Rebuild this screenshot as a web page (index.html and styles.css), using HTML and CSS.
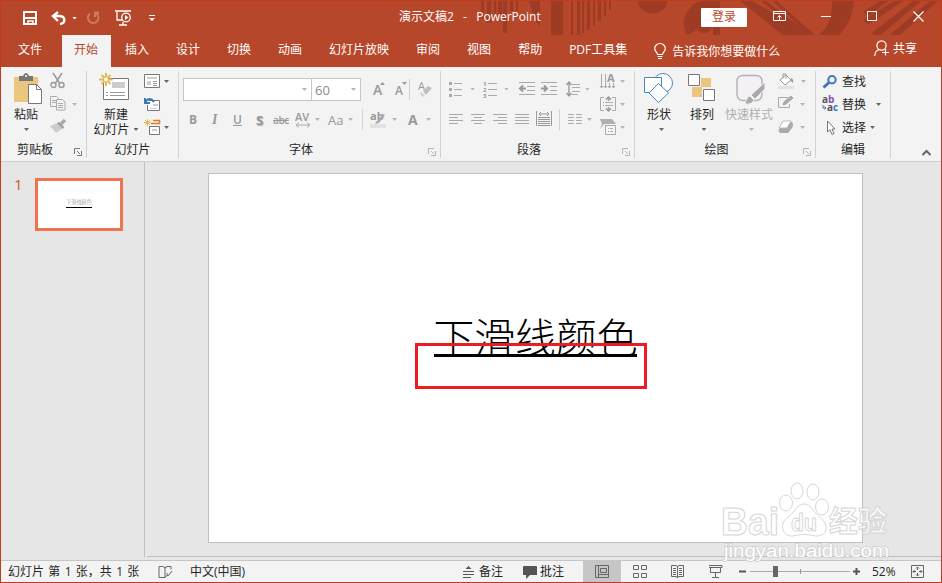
FILE: index.html
```html
<!DOCTYPE html>
<html lang="zh-CN">
<head>
    <meta charset="UTF-8">
    <meta name="viewport" content="width=device-width, initial-scale=1.0">
    <title>演示文稿2 - PowerPoint</title>
    <link rel="stylesheet" href="styles.css">
</head>
<body>
<div class="window">
    <header class="titlebar">
        <svg class="pattern" width="462" height="34" fill="#9e3b25">
            <path d="M2 0h3v18h-3zM8 0h4v22h-4zM15 0h2v18h-2zM19 0h4v14h-4zM24 0h4v32h-4zM31 0h3v10h-3zM37 0h2v10h-2zM50 0h11v26Q54 17 50 0zM72 0h12v37H72zM92 0h2v36h-2zM98 0h3v34h-3zM103 0h2v32h-2zM108 0h3v29h-3zM114 0h2v25h-2zM119 0h3v20h-3zM125 0h2v15h-2zM130 0h2v9h-2z"/>
            <path d="M159 0h29a14 12 0 0 1-29 0z"/>
            <path d="M208 34Q200 18 212 6q4-5 11-6h18v34h-7V22a12 12 0 0 0-18 8z"/>
            <circle cx="225" cy="23" r="9"/>
            <path d="M261 0h12l60 34h-29zM282 0h5l45 34h-7zM294 0h4l38 34h-6zM353 0h22q-2 22-15 34h-20q14-12 13-34z"/>
            <path d="M415 0h9l-35 24-5-5zM434 0h8l-44 37-5-5zM451 0h8l-46 41-5-5zM401 0h8l-20 15-5-4z"/>
        </svg>
        <div class="quick">
            <svg width="14" height="14" fill="none" stroke="#fff"><path d="M1 1h12v12H1zM1 7h12" stroke-width="2"/><path d="M5 13v-3h5v3" stroke-width="1.500"/></svg>
            <svg width="16" height="14" fill="none" stroke="#fff" stroke-width="2.4"><path d="M7 1L2 5l5 5M2 5h6c7 0 7 7 1 8"/></svg>
            <i class="caret light"></i>
            <svg width="14" height="14" fill="none" stroke="#cd7a64" stroke-width="2"><path d="M4 2.5a5.3 5.3 0 1 0 6-.3M9 6V1.5h4"/></svg>
            <svg width="17" height="16" fill="none" stroke="#fff" stroke-width="1.3"><path d="M0 1h16M2 2v8h5M8 12v3M4 15h8"/><circle cx="11" cy="7.5" r="4.3"/><path d="M10 5l3.5 2.5L10 10z" fill="#fff" stroke="none"/></svg>
            <svg width="6" height="7" fill="#fff"><path d="M0 0h6v1H0zM0 3h6L3 6z"/></svg>
        </div>
        <div class="doc-title">演示文稿2 &nbsp;- &nbsp;PowerPoint</div>
        <button class="login">登录</button>
        <div class="controls">
            <svg width="14" height="11" fill="none" stroke="#fff"><path d="M.5 .5h12v9H.5zM.5 2.5h12M6.5 9V4.500M4.500 6.500l2-2 2 2"/></svg>
            <svg width="11" height="11" stroke="#fff"><path d="M0 5.500h10"/></svg>
            <svg width="11" height="11" fill="none" stroke="#fff"><path d="M.5 .5h9v9h-9z"/></svg>
            <svg width="11" height="11" stroke="#fff" stroke-width="1.2"><path d="M.5 .5l10 10M10.500 .5l-10 10"/></svg>
        </div>
    </header>

    <nav class="tabs">
        <span class="tab file">文件</span>
        <span class="tab active">开始</span>
        <span class="tab">插入</span>
        <span class="tab">设计</span>
        <span class="tab">切换</span>
        <span class="tab">动画</span>
        <span class="tab">幻灯片放映</span>
        <span class="tab">审阅</span>
        <span class="tab">视图</span>
        <span class="tab">帮助</span>
        <span class="tab">PDF工具集</span>
        <span class="tell">
            <svg width="12" height="17" fill="none" stroke="#fff" stroke-width="1.2"><path d="M3.500 11.500C3 9 .7 8.500.7 5.500a5.300 5 0 0 1 10.600 0c0 3-2.300 3.500-2.800 6zM3.500 13.500h5M4 15.500h4"/></svg>
            告诉我你想要做什么
        </span>
        <span class="share">
            <svg width="16" height="17" fill="none" stroke="#fff" stroke-width="1.2"><circle cx="7.500" cy="5.500" r="4.600"/><path d="M.7 16c.3-4 2-6 4.800-6.500M11.500 9v6.500M8 12.500h7"/></svg>
            共享
        </span>
    </nav>

    <section class="ribbon">
        <div class="group clipboard">
            <div class="group-body">
                <div class="big">
                    <svg width="28" height="31"><path d="M0 4h24v25H0z" fill="#ebc67f"/><path d="M5 3h4q1-3 3-3t3 3h4v5H5z" fill="#777"/><circle cx="12" cy="3" r="1" fill="#fff"/><path d="M14.500 11.500h8l5 5v14h-13z" fill="#fff" stroke="#777"/><path d="M22.500 11.500v5h5" fill="none" stroke="#777"/></svg>
                    <span>粘贴</span>
                    <i class="caret"></i>
                </div>
                <div class="stack">
                    <svg width="16" height="16" fill="none" stroke="#999" stroke-width="1.400"><path d="M3 0l6.500 10M12 0L5.500 10"/><circle cx="3.500" cy="12" r="2.500"/><circle cx="11.500" cy="12" r="2.500"/></svg>
                    <svg width="16" height="15" fill="#f3f3f3" stroke="#aaa"><path d="M.5 .5h6l2 2v8h-8zM2 4.500h4M2 6.500h4"/><path d="M6.500 3.500h6l2.500 2.500v8H6.500zM8 7.500h5M8 9.500h5M8 11.500h5"/></svg>
                    <svg width="17" height="15"><path d="M0 7l8-3 5 5-7 5z" fill="#ccc"/><path d="M7 4l2-1 5 5-1 2z" fill="#999"/><path d="M11 5l4-4" stroke="#aaa" stroke-width="3.500"/></svg>
                </div>
                <i class="caret pale"></i>
            </div>
            <div class="group-label"><span>剪贴板</span><svg class="launcher" width="8" height="8"><path d="M.5 6V.5H6M3 3l3 3M7.500 3v4.500H3" /></svg></div>
        </div>

        <div class="group slides">
            <div class="group-body">
                <div class="big">
                    <svg width="32" height="31" fill="none"><path d="M4.500 5.500h25v21h-25z" fill="#fff" stroke="#777"/><path d="M13 9h13v6H13z" fill="#ccc"/><path d="M7 19.500h2M11 19.500h15M7 22.500h2M11 22.500h15" stroke="#999"/><path d="M7 0v13M0 6.500h14M2.500 2l9 9M11.500 2l-9 9" stroke="#e9b653" stroke-width="2"/><circle cx="7" cy="6.500" r="2" fill="#fff"/></svg>
                    <span>新建</span>
                    <span class="with-caret">幻灯片<i class="caret"></i></span>
                </div>
                <div class="stack carets">
                    <div><svg width="16" height="15" fill="#fff" stroke="#777"><path d="M.5 1.500h15v13H.5z"/><path d="M3 4h10v2H3zM3 8h4v4H3z" fill="#ccc" stroke="none"/><path d="M9 8.500h4M9 10.500h4M9 12.500h4" stroke="#999"/></svg><i class="caret"></i></div>
                    <div><svg width="16" height="16" fill="none" stroke="#777"><path d="M4.500 4.500h11v10h-12V9" fill="#fff"/><path d="M9 8h5v2H9zM6 12h7v1H6z" fill="#ccc" stroke="none"/><path d="M1 2v5h5M1 6q5-6 9 0" stroke="#3c77b3" stroke-width="2"/></svg></div>
                    <div><svg width="16" height="16" fill="none" stroke="#777"><path d="M5.500 7.500h10v8h-10z" fill="#fff"/><path d="M8 10h5v2H8z" fill="#ccc" stroke="none"/><path d="M7 4.500h8.500v-3H9" stroke="#e17a2d" stroke-width="1.500"/><path d="M3.500 0v7M0 3.500h7M1 1l5 5M6 1L1 6" stroke="#e9b653"/></svg><i class="caret"></i></div>
                </div>
            </div>
            <div class="group-label"><span>幻灯片</span></div>
        </div>

        <div class="group font">
            <div class="group-body">
                <div class="font-row top">
                    <div class="select"><i class="caret pale"></i></div>
                    <div class="select size">60<i class="caret pale"></i></div>
                    <svg width="13" height="16"><text x="0" y="13" class="glyph large">A</text><path d="M7 3h5L9.500 0z" fill="#999"/></svg>
                    <svg width="13" height="16"><text x="0" y="13" class="glyph mid">A</text><path d="M7 0h5L9.500 3z" fill="#999"/></svg>
                    <b class="line"></b>
                    <svg width="15" height="16"><text x="0" y="8" class="glyph">A</text><path d="M5 9l5-5 4 2-6 7z" fill="#c0c0c0"/><path d="M3 10l4 4-2 1-3-3z" fill="#d0d0d0"/></svg>
                </div>
                <div class="font-row bottom">
                    <b class="fmt">B</b>
                    <i class="fmt serif">I</i>
                    <u class="fmt bold">U</u>
                    <b class="fmt shadow">S</b>
                    <s class="fmt small">abc</s>
                    <svg width="16" height="16"><text x="0" y="9" class="glyph semi">AV</text><path d="M1 13h14M4 10.500L1 13l3 2.500M12 10.500l3 2.500-3 2.500" fill="none" stroke="#aaa"/></svg>
                    <i class="caret pale"></i>
                    <span class="fmt wide">Aa</span>
                    <i class="caret pale"></i>
                    <b class="line"></b>
                    <svg width="17" height="16"><text x="0" y="8" class="glyph bold">ab</text><path d="M0 12h16v4H0z" fill="#e5e0e5"/><path d="M6 10l7-8 2 1-6 8-4 1z" fill="#aaa"/></svg>
                    <i class="caret pale"></i>
                    <b class="fmt color">A</b>
                    <i class="caret pale"></i>
                </div>
            </div>
            <div class="group-label"><span>字体</span><svg class="launcher off" width="8" height="8"><path d="M.5 6V.5H6M3 3l3 3M7.500 3v4.500H3" /></svg></div>
        </div>

        <div class="group paragraph">
            <div class="group-body">
                <div class="para-rows">
                    <div class="para-row top">
                        <svg width="14" height="16" stroke="#aaa"><path d="M5 2.500h8M5 8.500h8M5 14.500h8"/><path d="M0 2.500h3M0 8.500h3M0 14.500h3" stroke-width="3"/></svg>
                        <i class="caret pale"></i>
                        <svg width="15" height="16"><path d="M5 2.500h9M5 8.500h9M5 14.500h9" stroke="#aaa"/><text x="0" y="5" class="tiny">1</text><text x="0" y="11" class="tiny">2</text><text x="0" y="17" class="tiny">3</text></svg>
                        <i class="caret pale"></i>
                        <svg width="17" height="14" fill="none" stroke="#aaa"><path d="M0 .5h16M8 4.500h8M8 8.500h8M0 12.500h16"/><path d="M7 6.500H1M4 3.500l-3 3 3 3" stroke="#999" stroke-width="2"/></svg>
                        <svg width="17" height="14" fill="none" stroke="#aaa"><path d="M0 .5h16M9 4.500h7M9 8.500h7M0 12.500h16"/><path d="M0 6.500h6M3 3.500l3 3-3 3" stroke="#999" stroke-width="2"/></svg>
                        <svg width="15" height="16" fill="none" stroke="#aaa"><path d="M6 3.500h8M6 6.500h8M6 10.500h8M6 13.500h6"/><path d="M3 1v14M.5 4L3 1l2.500 3M.5 12L3 15l2.500-3" stroke="#999" stroke-width="1.400"/></svg>
                        <i class="caret pale"></i>
                    </div>
                    <div class="para-row bottom">
                        <svg width="14" height="11" stroke="#aaa"><path d="M0 .5h14M0 3.500h9M0 6.500h14M0 9.500h9"/></svg>
                        <svg width="14" height="11" stroke="#aaa"><path d="M0 .5h14M3 3.500h8M0 6.500h14M3 9.500h8"/></svg>
                        <svg width="14" height="11" stroke="#aaa"><path d="M0 .5h14M5 3.500h9M0 6.500h14M5 9.500h9"/></svg>
                        <svg width="14" height="11" stroke="#aaa"><path d="M0 .5h14M0 3.500h14M0 6.500h14M0 9.500h14"/></svg>
                        <svg width="17" height="17" fill="none" stroke="#999"><path d="M.5 0v15M15.500 0v15M3 3h10M5 1L3 3l2 2M11 1l2 2-2 2M2 6.500h12M2 8.500h12M2 10.500h12M2 12.500h12M2 14.500h12"/></svg>
                        <b class="line"></b>
                        <svg width="14" height="11" stroke="#aaa"><path d="M0 .5h6M8 .5h6M0 3.500h6M8 3.500h6M0 6.500h6M8 6.500h6M0 9.500h6M8 9.500h6"/></svg>
                        <i class="caret pale"></i>
                    </div>
                </div>
                <div class="stack carets">
                    <div><svg width="16" height="16"><path d="M1.500 1v14M5.500 1v14M9.500 10v5M13.500 10v5M0 13l1.500 2L3 13M4 13l1.500 2L7 13M8 13l1.500 2 1.500-2M12 13l1.500 2 1.500-2" fill="none" stroke="#aaa"/><text x="7" y="8.500" class="glyph bold">A</text></svg><i class="caret pale"></i></div>
                    <div><svg width="16" height="16" fill="none" stroke="#aaa"><path d="M4 1.500H.5v13H4M12 1.500h3.500v13H12M3 6.500h1M5 6.500h8M3 9.500h1M5 9.500h8"/><path d="M8.500 5V1M6 3.500L8.500 1 11 3.500M8.500 11v4M6 12.500L8.500 15l2.500-2.500" stroke="#999" stroke-width="1.500"/></svg><i class="caret pale"></i></div>
                    <div><svg width="16" height="16"><path d="M0 0h12l4 5H4l-4 5 2-5z" fill="#b0b0b0"/><path d="M5.500 6.500h10v9h-10z" fill="#f8f4f8" stroke="#aaa"/><path d="M8 9.500h1M10 9.500h3M8 12.500h1M10 12.500h3" stroke="#aaa"/></svg><i class="caret pale"></i></div>
                </div>
            </div>
            <div class="group-label"><span>段落</span><svg class="launcher off" width="8" height="8"><path d="M.5 6V.5H6M3 3l3 3M7.500 3v4.500H3" /></svg></div>
        </div>

        <div class="group drawing">
            <div class="group-body">
                <div class="big">
                    <svg width="30" height="31" fill="#fff" stroke="#4a86be"><circle cx="19" cy="10" r="9.500"/><path d="M.5 4.500h17v15H.5z"/><path d="M14.500 10.500l10 9.500-10 9.500L5 20z"/></svg>
                    <span>形状</span>
                    <i class="caret"></i>
                </div>
                <div class="big">
                    <svg width="28" height="31" fill="#fff" stroke="#777"><path d="M13 5h10v9H13zM4 14h10v10H4z" fill="#ebc67f" stroke="none"/><path d="M.5 1.500h11v11H.5zM15.500 16.500h11v11h-11z"/></svg>
                    <span>排列</span>
                    <i class="caret"></i>
                </div>
                <div class="big disabled">
                    <svg width="30" height="31" fill="#f5f0f5" stroke="#b5b0b5"><path d="M7 2.500h13q6 0 6 6v12q0 7-6 7H7q-6 0-6-7v-12q0-6 6-6z" stroke-width="1.400"/><path d="M29 9v7l-10 10-4-4zM14 23l4 4q-2 5-9 4 2-8 5-8z" fill="#aaa" stroke="#f3f3f3"/></svg>
                    <span>快速样式</span>
                    <i class="caret pale"></i>
                </div>
                <div class="stack carets">
                    <div><svg width="17" height="16"><path d="M8 2l5 5-6 5-5-5zM5 5V1h3v5" fill="#fff" stroke="#999"/><path d="M13 5q3 1 2 5l-2-2z" fill="#999"/><path d="M0 13h16v3H0z" fill="#e5e0e5"/></svg><i class="caret pale"></i></div>
                    <div><svg width="16" height="15" fill="none" stroke="#aaa"><path d="M10 1.500H.5v10h11V8"/><path d="M5 9l1-3 7-6 2 2-7 6z" fill="#aaa"/></svg><i class="caret pale"></i></div>
                    <div><svg width="16" height="16"><path d="M5 3h9q2 3 0 6l-4 5H2q-3-3 0-5z" fill="#aaa"/><path d="M5 2h8l-4 7H1z" fill="#fff" stroke="#bbb"/></svg><i class="caret pale"></i></div>
                </div>
            </div>
            <div class="group-label"><span>绘图</span><svg class="launcher off" width="8" height="8"><path d="M.5 6V.5H6M3 3l3 3M7.500 3v4.500H3" /></svg></div>
        </div>

        <div class="group editing">
            <div class="group-body">
                <div class="command"><svg width="16" height="14" fill="none" stroke="#3c77b3" stroke-width="2"><circle cx="10" cy="4.800" r="3.700"/><path d="M7 7.500l-5.500 5" stroke-width="3"/></svg>查找</div>
                <div class="command"><svg width="17" height="17"><text x="0" y="7" class="ab">a</text><text x="6" y="7" class="ab purple">b</text><text x="5" y="15" class="ab">a</text><text x="11" y="15" class="ab blue">c</text><path d="M1 9v3h3M2.500 10.500L4 12l-1.500 1.500" fill="none" stroke="#3c77b3"/></svg>替换<i class="caret far"></i></div>
                <div class="command"><svg width="16" height="16" fill="#fff" stroke="#777"><path d="M5.500 1v11l2.500-2.300 2 4.800 2-1-2-4.500h3z"/></svg>选择<i class="caret"></i></div>
            </div>
            <div class="group-label"><span>编辑</span></div>
        </div>
        <svg class="collapse" width="9" height="6" fill="none" stroke="#666" stroke-width="2"><path d="M.5 5L4.500 1l4 4"/></svg>
    </section>

    <main class="workspace">
        <aside class="thumbs">
            <span class="number">1</span>
            <div class="thumb"><span>下滑线颜色</span></div>
        </aside>
        <div class="editor">
            <div class="slide">
                <div class="slide-title">下滑线颜色</div>
                <div class="highlight"></div>
            </div>
        </div>
        <svg class="watermark" width="172" height="84">
            <g class="mark">
                <ellipse cx="62" cy="21" rx="6.500" ry="8"/>
                <ellipse cx="73" cy="9" rx="6" ry="8"/>
                <ellipse cx="89" cy="10" rx="6" ry="8"/>
                <ellipse cx="98" cy="25" rx="6.500" ry="8"/>
                <path d="M80 22c-7 0-9 8-16 13-10 8-5 20 5 19 8-2 14-2 22 0 12 1 15-11 5-19-7-5-9-13-16-13z"/>
            </g>
            <text x="-3" y="53" class="mark brand" textLength="58" lengthAdjust="spacingAndGlyphs">Bai</text>
            <text x="67" y="49" class="mark du" textLength="26" lengthAdjust="spacingAndGlyphs">du</text>
            <text x="105" y="50" class="mark cn" textLength="58" lengthAdjust="spacingAndGlyphs">经验</text>
            <text x="0" y="75" class="url" textLength="165" lengthAdjust="spacingAndGlyphs">jingyan.baidu.com</text>
        </svg>
    </main>

    <footer class="status">
        <span class="page">幻灯片 第 1 张，共 1 张</span>
        <svg class="spell" width="15" height="14" fill="none" stroke="#666"><path d="M7 12.500H1V1.500h3.500Q7 1.500 7 3.500v9q0-2 3-2M7 3.500q0-2 3-2h3v3M8.500 8l2 2.500L14 6"/></svg>
        <span class="lang">中文(中国)</span>
        <span class="notes"><svg width="12" height="13" fill="#555"><path d="M2.500 4h6L5.500 1zM0 6h11v1H0zM0 9h11v1H0zM0 12h8v1H0z"/></svg>备注</span>
        <span class="comments"><svg width="14" height="14" fill="#555"><path d="M1 1h12q1 0 1 1v8H7l-4 4v-4H0V2q0-1 1-1z"/></svg>批注</span>
        <span class="view active"><svg width="14" height="13" fill="none" stroke="#666"><path d="M.5 .5h13v12H.5zM3.500 1v11M5.500 3.500h6v4h-6zM3.500 9.500h10"/></svg></span>
        <span class="view"><svg width="14" height="13" fill="none" stroke="#666"><path d="M.5 .5h5v4h-5zM8.500 .5h5v4h-5zM.5 8.500h5v4h-5zM8.500 8.500h5v4h-5z"/></svg></span>
        <span class="view"><svg width="14" height="13" fill="none" stroke="#666"><path d="M.5 .5H5l1.500 1L8 .5h4.500v11H8l-1.500 1-1.500-1H.5zM6.500 1v12M2 3.500h3M8 3.500h3M2 5.500h3M8 5.500h3M2 7.500h3M8 7.500h3M2 9.500h3M8 9.500h3"/></svg></span>
        <span class="view"><svg width="14" height="13" fill="none" stroke="#666"><path d="M0 .5h13v2H0M1.500 3v4.500h10V3M6.500 8v4M3 12.500h7"/></svg></span>
        <div class="zoom">
            <svg width="7" height="7" stroke="#555" stroke-width="2"><path d="M0 3.500h7"/></svg>
            <div class="track"><i></i></div>
            <svg width="7" height="7" stroke="#555" stroke-width="2"><path d="M0 3.500h7M3.500 0v7"/></svg>
            <span>52%</span>
            <svg class="fit" width="14" height="14" fill="none" stroke="#666"><path d="M.5 .5h12v12H.5zM6.500 2v3M6.500 8v3M2 6.500h3M8 6.500h3M5 3.500L6.500 2 8 3.500M5 9.500L6.500 11 8 9.500M3.500 5L2 6.500 3.500 8M9.500 5L11 6.500 9.500 8"/></svg>
        </div>
    </footer>
</div>
</body>
</html>
```

FILE: styles.css
```css
* {
    box-sizing: border-box;
}
body {
    margin: 0;
    font: 12px/16px "Open Sans", "Noto Sans CJK SC", sans-serif;
    color: #262626;
}
svg {
    display: block;
    flex: none;
    overflow: visible;
}
.window {
    width: 942px;
    height: 583px;
    display: flex;
    flex-direction: column;
    border: 1px solid #c13b1d;
    background-color: #e6e6e6;
    overflow: hidden;
}

/* title bar */
.titlebar {
    height: 34px;
    flex: none;
    display: flex;
    align-items: center;
    position: relative;
    background-color: #b7472a;
    color: #fff;
}
.pattern {
    position: absolute;
    right: 0;
    top: 0;
    overflow: hidden;
}
.quick {
    display: grid;
    grid-template-columns: 28px 21px 14px 29px 34px 6px;
    align-items: center;
    padding-left: 22px;
    width: 398px;
}
.doc-title {
    width: 302px;
    white-space: nowrap;
    word-spacing: 1.5px;
    position: relative;
    padding-bottom: 2px;
}
.login {
    width: 46px;
    height: 19px;
    margin-bottom: 2px;
    padding: 0;
    border: 0;
    border-radius: 1px;
    background-color: #fff;
    color: #b7472a;
    font: inherit;
    position: relative;
}
.controls {
    display: grid;
    grid-template-columns: 48px 46px 46px 11px;
    margin-left: 26px;
    padding-bottom: 3px;
    position: relative;
}
.caret {
    display: block;
    flex: none;
    width: 5px;
    height: 3px;
    background-color: #666;
    clip-path: polygon(0 0, 100% 0, 50% 100%);
}
.caret.light {
    background-color: #fff;
}
.caret.pale {
    background-color: #b5b5b5;
}

/* tabs */
.tabs {
    height: 32px;
    flex: none;
    display: flex;
    gap: 3px;
    line-height: 29px;
    background-color: #b7472a;
    color: #fff;
    white-space: nowrap;
}
.tab {
    padding: 0 12px;
}
.tab.file {
    padding: 0 17px;
}
.tab.active {
    width: 49px;
    margin-right: -1px;
    background-color: #f3f3f3;
    color: #b7472a;
}
.tell {
    display: flex;
    align-items: center;
    gap: 6px;
    margin-left: 12px;
}
.share {
    display: flex;
    align-items: center;
    gap: 3px;
    margin: -5px 24px 0 auto;
}

/* ribbon */
.ribbon {
    height: 95px;
    flex: none;
    display: flex;
    background-color: #f3f3f3;
    border-bottom: 1px solid #d0d0d0;
}
.group {
    height: 87px;
    margin-top: 4px;
    display: flex;
    flex-direction: column;
    border-right: 1px solid #d2d2d2;
}
.group-body {
    height: 71px;
    display: flex;
    padding-top: 2px;
}
.group-label {
    display: flex;
    align-items: center;
    height: 16px;
    margin-top: 1px;
    text-align: center;
}
.group-label span {
    flex: 1;
}
.launcher {
    margin: 4px 4px 0 0;
    fill: none;
    stroke: #777;
}
.launcher.off {
    stroke: #b5b5b5;
}
.clipboard {
    width: 86px;
}
.clipboard .group-label span {
    margin-right: 5px;
}
.slides {
    width: 92px;
}
.font {
    width: 262px;
}
.font .group-label span,
.paragraph .group-label span,
.drawing .group-label span {
    margin-right: 5px;
}
.paragraph {
    width: 194px;
}
.drawing {
    width: 181px;
}
.editing {
    width: 75px;
}
.collapse {
    margin: 83px 10px 0 auto;
}
.big {
    display: flex;
    flex-direction: column;
    align-items: center;
    line-height: 15px;
    white-space: nowrap;
}
.big svg {
    margin-bottom: 3px;
}
.big > .caret {
    margin-top: 6px;
}
.with-caret {
    display: flex;
    align-items: center;
    gap: 4px;
}
.disabled {
    color: #b0b0b0;
}
.stack {
    display: grid;
    grid-template-rows: 23px 23px 16px;
}
.stack.carets div {
    display: flex;
    gap: 6px;
}
.slides .stack.carets div {
    gap: 4px;
}
.stack.carets .caret {
    margin-top: 7px;
}
.clipboard .big {
    width: 28px;
    margin-left: 13px;
}
.clipboard .big span {
    margin-right: 4px;
}
.clipboard .big .caret {
    margin-right: 3px;
}
.clipboard .stack {
    margin-left: 8px;
}
.clipboard .stack + .caret {
    margin: 30px 0 0 5px;
}
.slides .big {
    width: 46px;
    margin-left: 6px;
}
.slides .big svg {
    margin-right: 2px;
}
.slides .stack {
    margin-left: 5px;
}

/* font group */
.font .group-body {
    flex-direction: column;
}
.font-row {
    display: grid;
    align-items: center;
}
.font-row.top {
    grid-template-columns: 128px 62px 22px 14px 9px 15px;
    margin: 5px 0 0 4px;
    height: 23px;
}
.font-row.bottom {
    grid-template-columns: 23px 21px 23px 17px 22px 20px 13px 20px 14px 8px 22px 16px 18px 6px;
    margin: 8px 0 0 10px;
    height: 21px;
}
.select {
    width: 129px;
    height: 23px;
    display: flex;
    align-items: center;
    justify-content: space-between;
    padding: 0 4px 0 3px;
    border: 1px solid #c6c6c6;
    background-color: #fff;
    color: #8a8a8a;
}
.select .caret {
    margin-left: auto;
}
.select.size {
    width: 50px;
    font-size: 13px;
}
.line {
    width: 1px;
    height: 21px;
    background-color: #d2d2d2;
}
.fmt {
    color: #999;
}
.fmt.bold {
    font-weight: 600;
}
.fmt.wide {
    font-size: 13px;
}
.serif {
    font-family: "Liberation Serif", serif;
    font-weight: bold;
    font-size: 14px;
}
.shadow {
    font-size: 13px;
    text-shadow: 1px 1px 1px #aaa;
}
.small {
    font-size: 10px;
    font-weight: 600;
    letter-spacing: -0.4px;
}
.color {
    font-size: 14px;
}
.glyph {
    font: 11px "Open Sans", sans-serif;
    fill: #999;
}
.glyph.large {
    font-size: 14px;
    font-weight: 600;
}
.glyph.mid {
    font-size: 12px;
    font-weight: 600;
}
.glyph.semi {
    font-weight: 600;
}
.glyph.bold {
    font-weight: bold;
}
.tiny {
    font: bold 6px "Open Sans", sans-serif;
    fill: #999;
}

/* paragraph group */
.para-rows {
    width: 151px;
    padding-left: 8px;
}
.para-row {
    display: grid;
    align-items: center;
}
.para-row.top {
    grid-template-columns: 21px 13px 21px 15px 22px 25px 19px 6px;
    height: 22px;
    margin-top: 5px;
}
.para-row.bottom {
    grid-template-columns: 22px 22px 22px 21px 23px 9px 19px 6px;
    height: 21px;
    margin-top: 9px;
}
.paragraph .stack {
    margin-left: 8px;
}
.paragraph .stack .caret {
    margin-left: -2px;
}

/* drawing group */
.drawing .big:nth-child(1) {
    width: 30px;
    margin-left: 9px;
}
.drawing .big:nth-child(1) .caret {
    margin-left: 5px;
}
.drawing .big:nth-child(2) {
    width: 30px;
    margin-left: 13px;
}
.drawing .big:nth-child(2) .caret {
    margin-left: 4px;
}
.drawing .big:nth-child(3) {
    width: 48px;
    margin: 0 5px 0 8px;
}
.drawing .big:nth-child(3) svg {
    margin-left: 4px;
}
.drawing .big:nth-child(3) .caret {
    margin-left: 5px;
}

/* editing group */
.editing .group-body {
    flex-direction: column;
    gap: 7px;
    padding-left: 6px;
}
.command {
    height: 16px;
    display: flex;
    align-items: center;
    white-space: nowrap;
    padding-top: 1px;
}
.command svg {
    width: 20px;
}
.command .caret {
    margin-left: 4px;
}
.command .caret.far {
    margin-left: 10px;
}
.ab {
    font: bold 10px "Open Sans", sans-serif;
    fill: #555;
}
.purple {
    fill: #8a4fb0;
}
.blue {
    fill: #3c77b3;
}

/* workspace */
.workspace {
    height: 398px;
    flex: none;
    display: flex;
    position: relative;
}
.thumbs {
    width: 144px;
    height: 395px;
    display: flex;
    border-right: 1px solid #bfbfbf;
    padding: 16px 0 0 13px;
}
.number {
    width: 21px;
    font-size: 15px;
    line-height: 13px;
    color: #d35434;
}
.thumb {
    width: 88px;
    height: 53px;
    border: 3px solid #f07351;
    background-color: #fff;
    text-align: center;
    padding-top: 15px;
    line-height: 7px;
}
.thumb span {
    display: inline-block;
    height: 9px;
    border-bottom: 1px solid #000;
    font-size: 5.2px;
    color: #aaa;
}
.editor {
    flex: 1;
    height: 395px;
    margin-left: 2px;
    padding: 11px 0 0 61px;
    border-bottom: 1px solid #bfbfbf;
}
.slide {
    width: 655px;
    height: 370px;
    position: relative;
    display: flex;
    justify-content: center;
    border: 1px solid #c0c0c0;
    background-color: #fff;
}
.slide-title {
    height: 43px;
    margin-top: 140px;
    border-bottom: 3px solid #000;
    font-family: "Noto Sans CJK SC", sans-serif;
    font-size: 40.8px;
    font-weight: 300;
    line-height: 43px;
    color: #000;
}
.highlight {
    position: absolute;
    left: 206px;
    top: 169px;
    width: 232px;
    height: 46px;
    border: 3px solid #ed1c24;
}
.watermark {
    position: absolute;
    right: 45px;
    top: 320px;
}
.mark {
    fill: #fff;
    fill-opacity: .75;
    stroke: #d6d6d6;
    stroke-width: 1px;
}
.brand {
    font: bold 38px "Liberation Sans", sans-serif;
}
.du {
    font: bold 24px "Liberation Sans", sans-serif;
}
.cn {
    font: bold 29px "Noto Sans CJK SC", sans-serif;
}
.url {
    font: 18px "Liberation Sans", sans-serif;
    fill: #fff;
    stroke: #d0d0d0;
    stroke-width: 1.5px;
    paint-order: stroke;
}

/* status bar */
.status {
    flex: 1;
    display: flex;
    align-items: center;
    padding-bottom: 1px;
    border-top: 1px solid #c6c6c6;
    background-color: #f3f3f3;
    white-space: nowrap;
}
.page {
    width: 150px;
    padding-left: 7px;
    word-spacing: 1.2px;
}
.spell {
    margin-left: 7px;
}
.lang {
    width: 273px;
    margin-left: 17px;
}
.notes,
.comments {
    width: 60px;
    display: flex;
    align-items: center;
    gap: 4px;
}
.comments {
    gap: 3px;
}
.view {
    width: 38px;
    height: 21px;
    display: flex;
    align-items: center;
    justify-content: center;
}
.view.active {
    background-color: #c6c6c6;
}
.zoom {
    display: flex;
    align-items: center;
    margin-left: 4px;
}
.track {
    width: 100px;
    height: 11px;
    margin: 0 3px 0 4px;
    padding-left: 23px;
    background: linear-gradient(#999, #999) 50px 3px / 1px 5px no-repeat, linear-gradient(#aaa, #aaa) 0 5px / 100% 1px no-repeat;
}
.track i {
    display: block;
    width: 5px;
    height: 11px;
    background-color: #666;
}
.zoom span {
    margin-left: 12px;
    width: 39px;
}
```
